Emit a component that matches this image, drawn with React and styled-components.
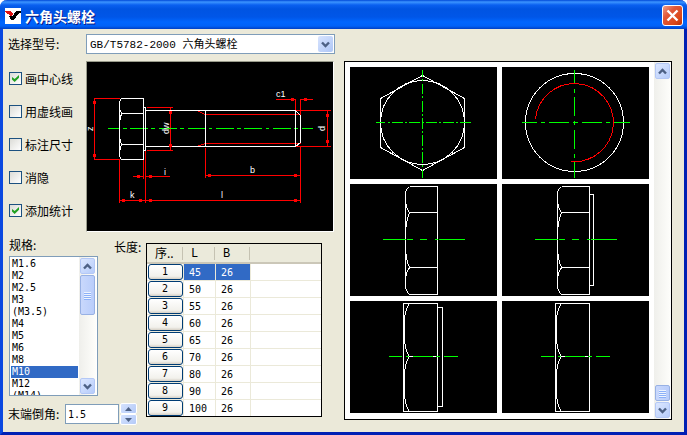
import { useState } from "react";
import styled, { createGlobalStyle } from "styled-components";

const MODELS = ["GB/T5782-2000 六角头螺栓"];
const SIZES = ["M1.6", "M2", "M2.5", "M3", "(M3.5)", "M4", "M5", "M6", "M8", "M10", "M12", "(M14)"];
const LENGTHS = [45, 50, 55, 60, 65, 70, 80, 90, 100];
const OPTIONS = [
    { id: "center", label: "画中心线", on: true },
    { id: "dashed", label: "用虚线画", on: false },
    { id: "dims", label: "标注尺寸", on: false },
    { id: "hidden", label: "消隐", on: false },
    { id: "stats", label: "添加统计", on: true },
];

// [x1, x2] pairs on a horizontal line
function dashH(y, parts) {
    return parts.map(([a, b]) => `M${a} ${y}H${b}`).join("");
}

function dashV(x, parts) {
    return parts.map(([a, b]) => `M${x} ${a}V${b}`).join("");
}

function Arrow({ up, size = 9 }) {
    return (
        <svg width={size} height={size} viewBox="0 0 9 9" aria-hidden="true">
            <path d={up ? "M1 6.5L4.5 3L8 6.5" : "M1 2.5L4.5 6L8 2.5"} fill="none" stroke="#4d6185" strokeWidth="2.4" />
        </svg>
    );
}

function Scrollbar({ thumb, atEnd, label }) {
    return (
        <Track>
            <ScrollButton type="button" aria-label={label + "向上"}><Arrow up /></ScrollButton>
            <Rail $end={atEnd}>
                <Thumb $height={thumb}><i /><i /><i /><i /></Thumb>
            </Rail>
            <ScrollButton type="button" aria-label={label + "向下"}><Arrow /></ScrollButton>
        </Track>
    );
}

function BoltDrawing() {
    const center = [[107, 118], [122, 126], [129, 147], [150, 154], [158, 176], [179, 183], [187, 205], [208, 211],
        [215, 233], [236, 240], [243, 261], [265, 268], [272, 290], [293, 297], [301, 312]];
    const ends = [[93, 101], [93, 154], [169, 111], [169, 144], [137, 175], [149, 175], [122, 199], [139, 199],
        [149, 199], [294, 199], [208, 174], [294, 174], [291, 98], [304, 98], [326, 114], [326, 140]];
    return (
        <svg viewBox="87 62 246 169" shapeRendering="crispEdges" role="img" aria-label="六角头螺栓">
            <g transform="translate(.5 .5)" fill="none">
                <path stroke="#f00" d="M93 98H119M93 159H119M94 98V159M146 107H172M146 150H172M170 107V150
                    M119 159V202M145 150V202M143 159V178M132 176H143M145 176H169M119 200H300M205 175H300M205 147V177M300 146V202
                    M275 99H295M300 99H312M295 98V110M300 98V115M295 110H330M295 146H330M327 110V146
                    M196 110L205 114H300M196 146L205 143H300" />
                <path stroke="#0f0" d={dashH(128, center)} />
                <path stroke="#fff" d="M121 98H143V159H121L119 156V101L121 98M119 108L121 113L119 121M119 137L121 144L119 151
                    M121 113H143M121 144H143M143 107H145V150H143M145 110H295L300 115V142L295 146H145M205 110V146M295 110V146" />
            </g>
            {ends.map(([x, y]) => <rect key={x + "-" + y} x={x} y={y} width="3" height="3" fill="#f00" />)}
            <DimText x="276" y="97">c1</DimText>
            <DimText x="164" y="175">i</DimText>
            <DimText x="130" y="198">k</DimText>
            <DimText x="221" y="198">l</DimText>
            <DimText x="250" y="173">b</DimText>
            <DimText transform="translate(93 131) rotate(-90)">z</DimText>
            <DimText transform="translate(169 134) rotate(-90)">dw</DimText>
            <DimText transform="translate(325 131) rotate(-90)">d</DimText>
        </svg>
    );
}

function HexTop() {
    return (
        <>
            <path stroke="#fff" d="M72 8L114 31V80L72 103L30 80V31Z" />
            <circle stroke="#fff" cx="72" cy="55" r="42" />
            <path stroke="#0f0" d={dashH(55, [[25, 34], [37, 39], [41, 52], [54, 56], [58, 69], [71, 73], [75, 86],
                [88, 90], [92, 103], [105, 107], [109, 120]])
                + dashV(72, [[2, 9], [11, 13], [16, 26], [28, 30], [33, 44], [46, 48], [50, 61], [63, 65], [67, 78],
                    [80, 82], [84, 95], [97, 99], [102, 110]])} />
        </>
    );
}

function ThreadTop() {
    return (
        <>
            <circle stroke="#fff" cx="72" cy="55" r="49" />
            <path stroke="#f00" d="M33 52A39 39 0 1 1 69 94" />
            <path stroke="#0f0" d={dashH(55, [[19, 34], [38, 42], [46, 66], [70, 75], [79, 99], [103, 107], [111, 127]])
                + dashV(72, [[2, 15], [21, 25], [29, 48], [53, 57], [62, 81], [86, 90], [94, 110]])} />
        </>
    );
}

function HexSide({ flange }) {
    return (
        <>
            <path stroke="#fff" d="M59 2H87V110H59Q55 106 55 101V10Q55 5 59 2M59 28H87M59 83H87
                M55 18Q56 24 59 28Q56 36 55 47M55 64Q56 77 59 83Q56 87 55 93" />
            {flange && <path stroke="#fff" d="M87 10H91V101H87" />}
            <path stroke="#0f0" d={dashH(55, [[32, 55], [56, 62], [69, 76], [84, 87], [88, 114]])} />
        </>
    );
}

function FlatSide({ flange }) {
    return (
        <>
            <path stroke="#fff" d="M53 2H87V110H53ZM59 2Q54 9 54 20V36Q54 48 59 55Q54 62 54 74V90Q54 103 59 110M59 55H87" />
            {flange && <path stroke="#fff" d="M87 6H92V105H87" />}
            <path stroke="#0f0" d={dashH(55, [[38, 51], [55, 58], [62, 82], [85, 89], [93, 107]])} />
        </>
    );
}

const VIEWS = [
    { name: "六角头俯视", shape: <HexTop /> },
    { name: "螺纹端视", shape: <ThreadTop /> },
    { name: "六角头侧视", shape: <HexSide /> },
    { name: "六角头侧视带垫面", shape: <HexSide flange /> },
    { name: "对边侧视带垫面", shape: <FlatSide flange /> },
    { name: "对边侧视", shape: <FlatSide /> },
];

export default function App() {
    const [checked, setChecked] = useState(OPTIONS.filter(o => o.on).map(o => o.id));
    const [size, setSize] = useState("M10");
    const [row, setRow] = useState(0);
    const [chamfer, setChamfer] = useState("1.5");

    function toggle(id) {
        setChecked(checked.includes(id) ? checked.filter(c => c !== id) : [...checked, id]);
    }

    function step(n) {
        setChamfer((Number(chamfer) + n).toFixed(1));
    }

    return (
        <Window>
            <GlobalStyle />
            <TitleBar>
                <svg width="16" height="16" viewBox="0 0 16 16" shapeRendering="crispEdges" aria-hidden="true">
                    <path fill="#fff" d="M0 0H16V16H0Z" />
                    <path fill="#e01010" d="M0 3H6L8 6L6 9L3 6H2Z" />
                    <path fill="#000" d="M11 3H16V5H14L9 12H6L4 8H6L7 9Z" />
                </svg>
                <h1>六角头螺栓</h1>
                <CloseButton type="button" aria-label="关闭">
                    <svg width="13" height="13" viewBox="0 0 13 13"><path d="M1.5 1.5L11.5 11.5M11.5 1.5L1.5 11.5" stroke="#fff" strokeWidth="2.4" /></svg>
                </CloseButton>
            </TitleBar>
            <Main>
                <Left>
                    <ModelRow>
                        <label htmlFor="model">选择型号:</label>
                        <ComboBox>
                            <select id="model">
                                {MODELS.map(m => <option key={m}>{m}</option>)}
                            </select>
                            <ComboArrow><Arrow /></ComboArrow>
                        </ComboBox>
                    </ModelRow>
                    <PreviewRow>
                        <Checks>
                            {OPTIONS.map(o => (
                                <CheckLabel key={o.id}>
                                    <CheckBox type="checkbox" checked={checked.includes(o.id)} onChange={() => toggle(o.id)} />
                                    {o.label}
                                </CheckLabel>
                            ))}
                        </Checks>
                        <Preview><BoltDrawing /></Preview>
                    </PreviewRow>
                    <SizeGrid>
                        <SizeBlock>
                            <label htmlFor="size">规格:</label>
                            <ListBox>
                                <SizeList id="size" size={SIZES.length} value={size} onChange={e => setSize(e.target.value)}>
                                    {SIZES.map(s => <option key={s}>{s}</option>)}
                                </SizeList>
                                <Scrollbar label="规格" thumb={40} />
                            </ListBox>
                        </SizeBlock>
                        <LengthLabel id="length">长度:</LengthLabel>
                        <TableBox>
                            <LengthTable aria-labelledby="length">
                                <colgroup>
                                    <col width="37" />
                                    <col width="32" />
                                    <col width="35" />
                                    <col />
                                </colgroup>
                                <thead>
                                    <tr><th>序..</th><th>L</th><th>B</th><th></th></tr>
                                </thead>
                                <tbody>
                                    {LENGTHS.map((l, i) => (
                                        <Row key={l} $active={i === row}>
                                            <td><RowButton type="button" onClick={() => setRow(i)}>{i + 1}</RowButton></td>
                                            <td>{l}</td>
                                            <td>26</td>
                                            <td></td>
                                        </Row>
                                    ))}
                                </tbody>
                            </LengthTable>
                        </TableBox>
                        <ChamferRow>
                            <label htmlFor="chamfer">末端倒角:</label>
                            <NumberInput id="chamfer" value={chamfer} onChange={e => setChamfer(e.target.value)} />
                            <Spinner>
                                <SpinButton type="button" aria-label="增加" onClick={() => step(0.5)}>
                                    <svg width="7" height="4" viewBox="0 0 7 4"><path d="M0 4L3.5 0L7 4Z" fill="#4d6185" /></svg>
                                </SpinButton>
                                <SpinButton type="button" aria-label="减少" onClick={() => step(-0.5)}>
                                    <svg width="7" height="4" viewBox="0 0 7 4"><path d="M0 0L3.5 4L7 0Z" fill="#4d6185" /></svg>
                                </SpinButton>
                            </Spinner>
                        </ChamferRow>
                    </SizeGrid>
                </Left>
                <Gallery>
                    <Views>
                        {VIEWS.map(v => (
                            <ViewButton key={v.name} type="button" aria-label={v.name}>
                                <svg viewBox="0 0 147 112" shapeRendering="crispEdges">
                                    <g transform="translate(.5 .5)" fill="none">{v.shape}</g>
                                </svg>
                            </ViewButton>
                        ))}
                    </Views>
                    <Scrollbar label="视图" thumb={16} atEnd />
                </Gallery>
            </Main>
        </Window>
    );
}

const GlobalStyle = createGlobalStyle`
    * {
        box-sizing: border-box;
    }
    body {
        margin: 0;
        background: #ffffff;
        color: #000000;
        font-family: "Noto Sans CJK SC", sans-serif;
        font-size: 12px;
        line-height: 14px;
    }
    button, input, select {
        margin: 0;
        padding: 0;
        font: inherit;
        color: inherit;
        outline: none;
    }
    svg {
        display: block;
    }
`;

const Window = styled.div`
    min-height: 100vh;
    display: flex;
    flex-direction: column;
    border: 3px solid #0a48e0;
    border-top: none;
    border-right-color: #0020b4;
    border-bottom-color: #0020b4;
    border-radius: 7px 7px 0 0;
    background: #ebe9d9;
`;

const TitleBar = styled.header`
    height: 29px;
    margin: 0 -3px;
    padding: 2px 4px 0 5px;
    display: flex;
    align-items: center;
    gap: 4px;
    border-radius: 7px 7px 0 0;
    background: linear-gradient(#0048d8 0, #3c94ff 2px, #0a60f0 5px, #0054e2 9px, #0056e8 17px, #0066fe 22px, #0062f8 26px, #0040c4 29px);

    h1 {
        flex: 1;
        margin: 0;
        color: #ffffff;
        font-size: 14px;
        font-weight: 700;
        line-height: 20px;
        text-shadow: 1px 1px #0a1883;
    }
`;

const CloseButton = styled.button`
    width: 21px;
    height: 21px;
    display: flex;
    align-items: center;
    justify-content: center;
    border: 1px solid #ffffff;
    border-radius: 3px;
    background: linear-gradient(135deg, #f0a088 0%, #e0583a 35%, #dc4818 75%, #b83008 100%);
`;

const Main = styled.main`
    flex: 1;
    display: flex;
    align-items: flex-start;
    gap: 9px;
    padding: 5px 12px 0 5px;
`;

const Left = styled.div`
    width: 327px;
    flex-shrink: 0;
`;

const ModelRow = styled.div`
    display: flex;
    align-items: center;
    margin-bottom: 7px;

    label {
        width: 78px;
    }
`;

const ComboBox = styled.div`
    position: relative;
    flex: 1;

    select {
        display: block;
        width: 100%;
        height: 20px;
        padding: 2px 0 0 3px;
        appearance: none;
        border: 1px solid #7f9db9;
        border-radius: 0;
        background: #ffffff;
        font-family: "Liberation Mono", "Noto Sans CJK SC", monospace;
        font-size: 11px;
    }
`;

// sits on the right end of the select and lets clicks through
const ComboArrow = styled.span`
    position: absolute;
    top: 2px;
    right: 2px;
    width: 15px;
    height: 16px;
    display: flex;
    align-items: center;
    justify-content: center;
    border-radius: 2px;
    background: linear-gradient(135deg, #d8e4fe, #aec6f6);
    pointer-events: none;
`;

const PreviewRow = styled.div`
    display: flex;
    margin-bottom: 6px;
`;

const Checks = styled.div`
    width: 78px;
    display: flex;
    flex-direction: column;
    gap: 20px;
    padding: 11px 0 0 1px;
`;

const CheckLabel = styled.label`
    height: 13px;
    display: flex;
    align-items: center;
    gap: 3px;
    white-space: nowrap;
`;

const CheckBox = styled.input`
    width: 13px;
    height: 13px;
    flex-shrink: 0;
    appearance: none;
    border: 1px solid #1c5180;
    background: linear-gradient(135deg, #dcdcd7, #ffffff);

    &:checked::before {
        content: "";
        display: block;
        width: 7px;
        height: 7px;
        margin: 2px;
        background: #21a121;
        clip-path: polygon(0 28%, 0 65%, 38% 100%, 100% 40%, 100% 0, 38% 58%);
    }
`;

const Preview = styled.div`
    width: 248px;
    border: 1px solid #ffffff;
    border-top-color: #9a9c8c;
    border-left-color: #9a9c8c;
    background: #000000;
`;

const DimText = styled.text`
    fill: #ffffff;
    font-family: "Liberation Sans", sans-serif;
    font-size: 9px;
`;

const SizeGrid = styled.div`
    display: grid;
    grid-template-columns: 106px 32px 176px;
    grid-template-rows: 158px auto;
    row-gap: 7px;
    align-items: start;
`;

const SizeBlock = styled.div`
    padding: 0 16px 0 1px;

    label {
        display: block;
        margin-bottom: 4px;
    }
`;

const ListBox = styled.div`
    height: 140px;
    display: flex;
    padding-right: 1px;
    border: 1px solid #7f9db9;
    background: #ffffff;
    overflow: hidden;
`;

const SizeList = styled.select`
    flex: 1;
    min-width: 0;
    height: 138px;
    padding: 1px;
    appearance: none;
    border: none;
    border-radius: 0;
    background: #ffffff;
    font-family: "DejaVu Sans Mono", monospace;
    font-size: 10px;
    overflow: hidden;
    scrollbar-width: none;

    option {
        height: 12px;
        min-height: 12px;
        padding: 0 0 0 1px;
        line-height: 12px;
    }
    option:checked {
        background: linear-gradient(#316ac5, #316ac5);
        color: #ffffff;
        -webkit-text-fill-color: #ffffff;
    }
`;

const Track = styled.div`
    width: 17px;
    flex-shrink: 0;
    display: flex;
    flex-direction: column;
    gap: 1px;
    padding: 1px;
    background: linear-gradient(to right, #efefeb, #fefefb);
`;

const ScrollButton = styled.button`
    height: 16px;
    flex-shrink: 0;
    display: flex;
    align-items: center;
    justify-content: center;
    border: 1px solid #b4c8f6;
    border-radius: 2px;
    background: linear-gradient(135deg, #dce7ff, #b6ccfa);
`;

const Rail = styled.div`
    flex: 1;
    display: flex;
    flex-direction: column;
    justify-content: ${({ $end }) => ($end ? "flex-end" : "flex-start")};
`;

const Thumb = styled.div`
    height: ${({ $height }) => $height}px;
    display: flex;
    flex-direction: column;
    align-items: center;
    justify-content: center;
    gap: 1px;
    border: 1px solid #98b1e4;
    border-radius: 2px;
    background: linear-gradient(to right, #c9d8fc, #b9cdfb);

    i {
        width: 7px;
        height: 1px;
        background: #eef4fe;
        box-shadow: 0 1px #8cb0f8;
    }
`;

const LengthLabel = styled.span`
    padding-top: 2px;
`;

const TableBox = styled.div`
    grid-column: 3;
    grid-row: 1 / span 2;
    height: 174px;
    margin-top: 5px;
    border: 1px solid #000000;
    background: #ffffff;
    overflow: hidden;
`;

const LengthTable = styled.table`
    width: 100%;
    table-layout: fixed;
    border-collapse: separate;
    border-spacing: 0;

    th, td {
        padding: 0;
        text-align: left;
        font-weight: 400;
    }
    th {
        height: 20px;
        padding-left: 8px;
        border-bottom: 2px solid #cbc7b8;
        background: linear-gradient(#c5c2b2, #c5c2b2) right 1px center / 1px 13px no-repeat, #ebeadb;
        font-family: "Noto Sans CJK SC", sans-serif;
    }
    th:nth-child(2), th:nth-child(3) {
        padding: 2px 0 0 7px;
        font-family: "Liberation Mono", monospace;
    }
    th:last-child {
        background: #ebeadb;
    }
`;

const Row = styled.tr`
    td {
        height: 17px;
        padding: 2px 0 0 5px;
        border-right: 1px solid #ebe9d9;
        border-bottom: 1px solid #ebe9d9;
        font-family: "DejaVu Sans Mono", monospace;
        font-size: 10px;
        line-height: 12px;
    }
    td:first-child {
        padding: 0;
    }
    td:last-child {
        border-right: none;
    }
    td:nth-child(2), td:nth-child(3) {
        background: ${({ $active }) => ($active ? "#316ac5" : "#ffffff")};
        color: ${({ $active }) => ($active ? "#ffffff" : "#000000")};
    }
`;

const RowButton = styled.button`
    display: block;
    width: 35px;
    height: 16px;
    margin: 0 auto;
    border: 1px solid #003c74;
    border-radius: 3px;
    background: linear-gradient(#ffffff, #f2f1ec 80%, #d6d0c5);
    line-height: 12px;
    text-align: center;
`;

const ChamferRow = styled.div`
    grid-column: 1 / span 2;
    grid-row: 2;
    display: flex;
    align-items: center;

    label {
        width: 57px;
        white-space: nowrap;
    }
`;

const NumberInput = styled.input`
    width: 54px;
    height: 20px;
    padding-left: 2px;
    border: 1px solid #7f9db9;
    background: #ffffff;
    font-family: "DejaVu Sans Mono", monospace;
    font-size: 10px;
`;

const Spinner = styled.div`
    display: flex;
    flex-direction: column;
    margin-left: 1px;
`;

const SpinButton = styled.button`
    width: 17px;
    height: 11px;
    display: flex;
    align-items: center;
    justify-content: center;
    border: 1px solid #ffffff;
    border-radius: 2px;
    background: linear-gradient(135deg, #d5e2fe, #b4caf8);
`;

const Gallery = styled.section`
    flex: 1;
    display: flex;
    margin-top: 27px;
    border: 1px solid #000000;
    background: #ffffff;
`;

const Views = styled.div`
    flex: 1;
    display: grid;
    grid-template-columns: 1fr 1fr;
    gap: 5px;
    padding: 5px 5px 6px 5px;
`;

const ViewButton = styled.button`
    border: none;
    background: #000000;

    svg {
        width: 100%;
    }
`;
